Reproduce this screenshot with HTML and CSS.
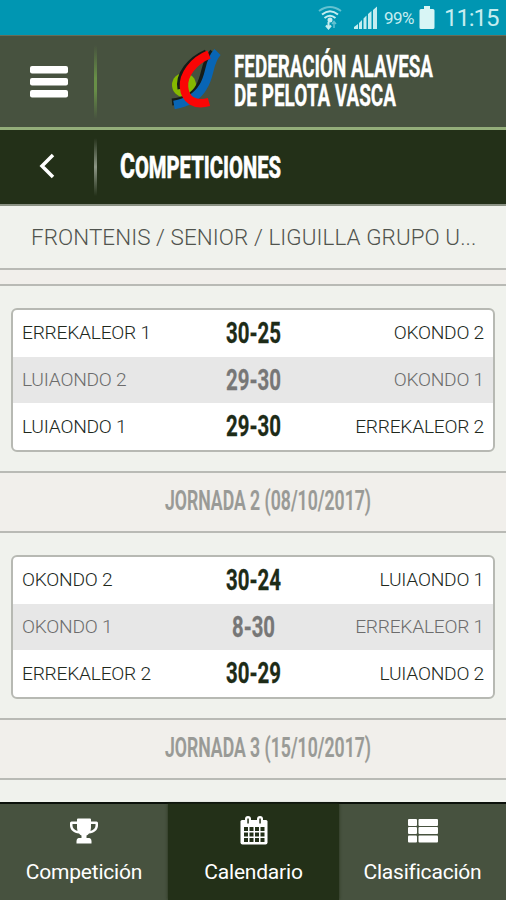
FILE: index.html
```html
<!DOCTYPE html>
<html lang="es">
<head>
<meta charset="utf-8">
<title>Competiciones</title>
<link rel="stylesheet" href="styles.css">
</head>
<body>
<div class="app">
  <div class="status">
    <svg class="wifi" width="24" height="26" viewBox="0 0 24 26" fill="none" stroke="#c5edf0" stroke-width="2"><path d="M1 6Q12-2 23 6" opacity=".5"/><path d="M4 9.500Q12 3 20 9.500M6.500 13Q12 8.500 17.500 13"/><circle cx="12" cy="15" r="1.500" fill="#c5edf0"/><path d="M10.500 17v6M8 20.500l2.500 3 2.500-3"/><path d="M16 23v-6M14 19l2-2.500 2 2.500" stroke-width="1.500" opacity=".5"/></svg>
    <svg class="signal" width="24" height="24" viewBox="0 0 24 24" fill="#c5edf0"><path d="M0 23v-2l4-3v5zM5 23v-6l3-3v9zM9.500 23V12.500l3-3V23zM14 23V8l3.500-3v18zM19 23V4l4-3.500V23z"/></svg>
    <span class="percent">99%</span>
    <svg class="battery" width="16" height="24" viewBox="0 0 16 24" fill="#d8f5f5"><path d="M5 0h6v3h3q1.500 0 1.500 1.500v17q0 1.500-1.500 1.500H2Q.5 23 .5 21.500v-17Q.5 3 2 3h3z"/></svg>
    <span class="clock">11:15</span>
  </div>
  <header class="header">
    <div class="side"><svg width="38" height="32" viewBox="0 0 38 32" fill="#fff"><rect width="38" height="7.500" rx="2"/><rect y="12" width="38" height="7.500" rx="2"/><rect y="24" width="38" height="7.500" rx="2"/></svg></div>
    <i class="divider green"></i>
    <svg class="logo" width="54" height="62" viewBox="0 0 54 62" fill="none"><circle cx="13" cy="36" r="12" fill="#85b900"/><path d="M42 3C33 13 35 26 28 38C22 49 12 52 1 53" stroke="#151c18" stroke-width="7"/><path d="M46.500 3C37 13 40 26 32 38C25 50 14 54 3 56" stroke="#0865b5" stroke-width="8.500"/><path d="M35 3C19 10 6 25 9 40" stroke="#151c18" stroke-width="5"/><path d="M38 5.500C22 12 12 26 13 38C14 51 24 57 38 53" stroke="#fa0505" stroke-width="8.500"/></svg>
    <svg class="brand" width="204" height="64" viewBox="0 0 204 64"><text x="1" y="29" textLength="199" lengthAdjust="spacingAndGlyphs">FEDERACIÓN ALAVESA</text><text x="1" y="58" textLength="162" lengthAdjust="spacingAndGlyphs">DE PELOTA VASCA</text></svg>
  </header>
  <div class="subheader">
    <div class="side"><svg width="16" height="26" viewBox="0 0 16 26" fill="none" stroke="#fff" stroke-width="3.500"><path d="M14 2L3 13l11 11"/></svg></div>
    <i class="divider pale"></i>
    <svg class="title" width="170" height="40" viewBox="0 0 170 40"><text x="0" y="32" textLength="161" lengthAdjust="spacingAndGlyphs"><tspan class="initial">C</tspan>OMPETICIONES</text></svg>
  </div>
  <div class="crumb">FRONTENIS / SENIOR / LIGUILLA GRUPO U...</div>
  <div class="strip"></div>
  <section class="games">
    <div class="row"><span>ERREKALEOR 1</span><svg class="score" width="56" height="30"><text x="1" y="25" textLength="55" lengthAdjust="spacingAndGlyphs">30-25</text></svg><span class="away">OKONDO 2</span></div>
    <div class="row muted"><span>LUIAONDO 2</span><svg class="score" width="56" height="30"><text x="1" y="25" textLength="55" lengthAdjust="spacingAndGlyphs">29-30</text></svg><span class="away">OKONDO 1</span></div>
    <div class="row"><span>LUIAONDO 1</span><svg class="score" width="56" height="30"><text x="1" y="25" textLength="55" lengthAdjust="spacingAndGlyphs">29-30</text></svg><span class="away">ERREKALEOR 2</span></div>
  </section>
  <div class="round"><svg width="208" height="34"><text x="1" y="26" textLength="206" lengthAdjust="spacingAndGlyphs">JORNADA 2 (08/10/2017)</text></svg></div>
  <section class="games second">
    <div class="row"><span>OKONDO 2</span><svg class="score" width="56" height="30"><text x="1" y="25" textLength="55" lengthAdjust="spacingAndGlyphs">30-24</text></svg><span class="away">LUIAONDO 1</span></div>
    <div class="row muted"><span>OKONDO 1</span><svg class="score" width="56" height="30"><text x="7" y="25" textLength="43" lengthAdjust="spacingAndGlyphs">8-30</text></svg><span class="away">ERREKALEOR 1</span></div>
    <div class="row"><span>ERREKALEOR 2</span><svg class="score" width="56" height="30"><text x="1" y="25" textLength="55" lengthAdjust="spacingAndGlyphs">30-29</text></svg><span class="away">LUIAONDO 2</span></div>
  </section>
  <div class="round last"><svg width="208" height="34"><text x="1" y="26" textLength="206" lengthAdjust="spacingAndGlyphs">JORNADA 3 (15/10/2017)</text></svg></div>
  <nav class="tabs">
    <div class="tab"><svg width="28" height="30" viewBox="0 0 28 30" fill="#fff"><path fill-rule="evenodd" d="M7 3.500Q7 2.500 8 2.500h12q1 0 1 1V5.500h5.500Q28 5.500 28 7v2.500c0 4.500-4 7.500-9 8q-1 1.500-2.500 2v2.500h3Q21.500 22.500 21.500 25v2.500h-15V25Q6.500 22.500 8.500 22h3v-2.500q-1.500-.5-2.500-2C4 17 0 14 0 9.500V7Q0 5.500 1.500 5.500H7zM2.500 8v1.500q0 3.500 5 5.500Q6.800 12 7 8zM25.500 8H21q.2 4-.5 7 5-2 5-5.500z"/></svg><span>Competición</span></div>
    <div class="tab active"><svg width="28" height="30" viewBox="0 0 28 30"><path d="M2 4h24q1.500 0 1.500 1.500v21q0 2-2 2h-23q-2 0-2-2v-21Q.5 4 2 4z" fill="#fff"/><g fill="#fff"><rect x="5" width="6" height="8" rx="3"/><rect x="17" width="6" height="8" rx="3"/></g><g fill="#233018"><rect x="7.300" y="2.500" width="1.500" height="5"/><rect x="19.300" y="2.500" width="1.500" height="5"/><path d="M4 11h4v4H4zM9.500 11h4v4h-4zM15 11h4v4h-4zM20.500 11h4v4h-4zM4 16.500h4v4H4zM9.500 16.500h4v4h-4zM15 16.500h4v4h-4zM20.500 16.500h4v4h-4zM4 22h4v4H4zM9.500 22h4v4h-4zM15 22h4v4h-4zM20.500 22h4v4h-4z"/></g></svg><span>Calendario</span></div>
    <div class="tab"><svg width="30" height="30" viewBox="0 0 30 30" fill="#fff"><rect y="3" width="9" height="7" rx="1"/><rect x="10.500" y="3" width="19.500" height="7" rx="1"/><rect y="11" width="9" height="7" rx="1"/><rect x="10.500" y="11" width="19.500" height="7" rx="1"/><rect y="19.500" width="9" height="7" rx="1"/><rect x="10.500" y="19.500" width="19.500" height="7" rx="1"/></svg><span>Clasificación</span></div>
  </nav>
</div>
</body>
</html>
```
FILE: styles.css
```css
* { box-sizing: border-box; }
body { margin: 0; font-family: Roboto, "Liberation Sans", sans-serif; }
svg { display: block; flex: none; overflow: visible; }
.app { width: 506px; height: 900px; display: flex; flex-direction: column; overflow: hidden; background: #f0f2ed; }
.app > * { flex: none; }
.status { height: 35px; background: #0096b2; display: flex; align-items: center; color: #c5edf0; padding-left: 318px; }
.signal { margin-left: 12px; }
.percent { font-size: 17px; width: 32px; letter-spacing: -.5px; margin-left: 6px; }
.battery { margin-left: 3px; }
.clock { font-size: 24px; margin-left: 9px; letter-spacing: -1.1px; line-height: 36px; padding-top: 1px; }
.header { height: 95px; background: #47523f; border-top: 1px solid #666c57; border-bottom: 3px solid #93ad79; display: flex; align-items: center; }
.side { width: 94px; display: flex; justify-content: center; padding-left: 4px; }
.subheader .side { padding-left: 0; }
.subheader .side svg { margin-top: -3px; }
.divider { width: 3px; height: 74px; }
.green { background: linear-gradient(#47523f, #688f47 45%, #688f47 60%, #47523f); }
.pale { height: 58px; background: linear-gradient(#233018, #8c9685, #233018); }
.logo { margin: -4px 0 0 74px; }
.brand { margin: -3px 0 0 8px; }
.brand text { font-size: 31px; font-weight: 700; fill: #fff; stroke: #fff; stroke-width: .3px; }
.subheader { height: 76px; background: #233018; border-bottom: 2px solid #8b9284; display: flex; align-items: center; }
.title { margin: -2px 0 0 23px; }
.title text { font-size: 31px; font-weight: 800; fill: #fff; stroke: #fff; stroke-width: .5px; }
.title .initial { font-size: 35px; }
.crumb { height: 62px; line-height: 63px; padding-left: 31px; font-size: 22.4px; font-weight: 300; letter-spacing: .08px; color: #50544e; white-space: nowrap; }
.strip { height: 18px; background: #f1efeb; border-top: 2px solid #b9bab5; border-bottom: 2px solid #b9bab5; }
.games { height: 144px; margin: 22px 11px 0; border: 2px solid #b7b9b3; border-radius: 6px; background: #fff; display: flex; flex-direction: column; overflow: hidden; }
.row { flex: 1; display: grid; grid-template-columns: 1fr 56px 1fr; align-items: center; padding: 0 9px 1px; font-size: 19.2px; font-weight: 300; letter-spacing: -.25px; color: #20281c; }
.away { text-align: right; }
.muted { background: #e7e7e7; color: #6c6c6c; }
.score { letter-spacing: 0; }
.score text { font-size: 30px; font-weight: 700; fill: #1d2b17; stroke: #1d2b17; stroke-width: .3px; }
.muted .score text { fill: #777; stroke: #777; }
.round { height: 62px; margin-top: 19px; border-top: 2px solid #b9bab5; border-bottom: 2px solid #b9bab5; background: #f1efeb; display: flex; justify-content: center; align-items: center; padding-left: 29px; padding-bottom: 3px; }
.round text { font-size: 28px; font-weight: 600; fill: #999a96; stroke: #999a96; stroke-width: .2px; }
.tabs { margin-top: auto; height: 98px; border-top: 2px solid #0c110b; background: #47523f; display: grid; grid-template-columns: 168px 171px 167px; color: #fff; }
.tab { display: flex; flex-direction: column; align-items: center; padding-top: 12px; font-size: 21px; letter-spacing: -.2px; }
.tab span { line-height: 28px; margin-top: 12px; }
.active { background: #233018; box-shadow: 0 0 3px #233018; }
```
